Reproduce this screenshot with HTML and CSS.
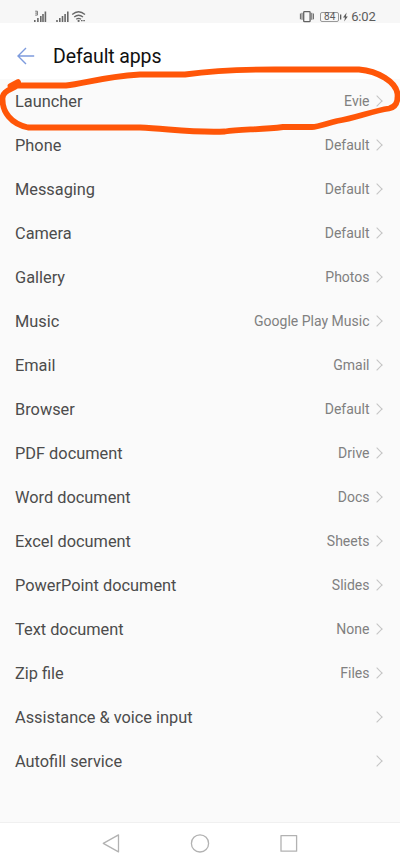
FILE: index.html
```html
<!DOCTYPE html>
<html lang="en">
<head>
<meta charset="utf-8">
<title>Default apps</title>
<link rel="stylesheet" href="styles.css">
</head>
<body>
<div class="screen">
  <div class="status">
    <svg class="status-left" width="56" height="14" viewBox="32 10 56 14" fill="none" stroke="#686868">
      <path d="M34.8 22v-2M37.9 22v-4M40.8 22v-6M43 22v-8M45.4 22V11.500" stroke-width="1.6"/>
      <path d="M35.2 11.2h2.2v1.9h-2.2M37.4 13.1v2h-2.2" stroke-width=".9"/>
      <path d="M57 22v-2M59.8 22v-4M62.5 22v-6M65.1 22v-8M67.8 22V11.500" stroke-width="1.6"/>
      <path d="M72.2 14.5q6.3-5.5 12.8 0M74.2 17q4.4-3.5 8.8 0M76.2 19.3q2.4-1.8 4.8 0" stroke-width="1.3"/>
      <circle cx="78.6" cy="20.9" r="1.1" fill="#686868" stroke="none"/>
      <path d="M81 20.7h4" stroke-width="1.2" stroke-dasharray="1.6 .7"/>
    </svg>
    <div class="status-right">
      <svg width="16" height="14" viewBox="299 10 16 14" fill="none" stroke="#626262">
        <rect x="303.7" y="11.7" width="6.4" height="10" rx=".8" stroke-width="1.3"/>
        <path d="M300.4 13.5v5.8M302 12.8v7M311.8 12.8v7M313.4 13.5v5.8" stroke-width="1"/>
      </svg>
      <span class="battery">84</span>
      <svg class="bolt" width="8" height="12" viewBox="0 0 8 12" fill="#5c5c5c"><path d="M0 3.500h1.300v5H0zM6.600 1.500 3 6.400H5l-.8 4.200 3.600-5.200H5.900z"/></svg>
      <span class="time">6:02</span>
    </div>
  </div>
  <header class="appbar">
    <svg width="18" height="18" viewBox="0 0 18 18" fill="none" stroke="#7d9bdd" stroke-width="1.4"><path d="M17.200 9H1M9 1 1 9l8 8"/></svg>
    <h1>Default apps</h1>
  </header>
  <main class="list">
    <div class="row"><span class="name">Launcher</span><span class="value">Evie</span><i class="chevron"></i></div>
    <div class="row"><span class="name">Phone</span><span class="value">Default</span><i class="chevron"></i></div>
    <div class="row"><span class="name">Messaging</span><span class="value">Default</span><i class="chevron"></i></div>
    <div class="row"><span class="name">Camera</span><span class="value">Default</span><i class="chevron"></i></div>
    <div class="row"><span class="name">Gallery</span><span class="value">Photos</span><i class="chevron"></i></div>
    <div class="row"><span class="name">Music</span><span class="value">Google Play Music</span><i class="chevron"></i></div>
    <div class="row"><span class="name">Email</span><span class="value">Gmail</span><i class="chevron"></i></div>
    <div class="row"><span class="name">Browser</span><span class="value">Default</span><i class="chevron"></i></div>
    <div class="row"><span class="name">PDF document</span><span class="value">Drive</span><i class="chevron"></i></div>
    <div class="row"><span class="name">Word document</span><span class="value">Docs</span><i class="chevron"></i></div>
    <div class="row"><span class="name">Excel document</span><span class="value">Sheets</span><i class="chevron"></i></div>
    <div class="row"><span class="name">PowerPoint document</span><span class="value">Slides</span><i class="chevron"></i></div>
    <div class="row"><span class="name">Text document</span><span class="value">None</span><i class="chevron"></i></div>
    <div class="row"><span class="name">Zip file</span><span class="value">Files</span><i class="chevron"></i></div>
    <div class="row"><span class="name">Assistance &amp; voice input</span><i class="chevron"></i></div>
    <div class="row"><span class="name">Autofill service</span><i class="chevron"></i></div>
  </main>
  <nav class="navbar">
    <svg width="20" height="20" viewBox="0 0 20 20"><path d="M17.500 1.900v17L2.300 10.400z"/></svg>
    <svg width="20" height="20" viewBox="0 0 20 20"><circle cx="10" cy="10.400" r="8.600"/></svg>
    <svg width="20" height="20" viewBox="0 0 20 20"><rect x="2" y="2.600" width="15.600" height="15.600"/></svg>
  </nav>
  <svg class="marker" width="400" height="80" viewBox="0 65 400 80">
    <path d="M10.500 86 18 82M14 85.500H66C84 84 100 77 140 74.500H185C212 71 240 69.500 275 69.500H359C378 71 396 82 397.500 94C398 102 396 107 389 108.500C372 111 356 118 337 121C325 124 318 127 312 127H283C260 130 240 129 225 131.500C195 133 170 129 140 127.500H28C11 124 2 112 2.500 98C3 91 10 90 17 85.500"/>
  </svg>
</div>
</body>
</html>
```
FILE: styles.css
```css
body {
  margin: 0;
  font-family: Roboto, "Liberation Sans", sans-serif;
}
.screen {
  position: relative;
  display: flex;
  flex-direction: column;
  width: 400px;
  height: 866px;
  overflow: hidden;
  background: #fafafa;
}
.status {
  display: flex;
  justify-content: space-between;
  box-sizing: border-box;
  height: 23px;
  padding: 10px 24.5px 0 32px;
  background: #f7f7f7;
  color: #5c5c5c;
}
.status-left { flex: none; }
.status-right {
  display: flex;
  align-items: flex-start;
}
.status svg { overflow: visible; }
.battery {
  box-sizing: border-box;
  width: 19px;
  height: 10px;
  margin: 2px 0 0 5px;
  border: 1px solid #999;
  border-radius: 2px;
  font-size: 10px;
  line-height: 8.5px;
  text-align: center;
}
.bolt { margin: 1px 3px 0 1px; }
.time {
  font-size: 13px;
  line-height: 14px;
  letter-spacing: -0.2px;
}
.appbar {
  display: flex;
  align-items: center;
  box-sizing: border-box;
  height: 56px;
  padding: 10px 17px 0;
  background: #fff;
}
.appbar h1 {
  margin: 1px 0 0 18px;
  font-size: 19.5px;
  font-weight: 400;
  line-height: 24px;
  letter-spacing: -0.12px;
  color: #111;
}
.list { flex: 1; }
.row {
  display: flex;
  align-items: center;
  height: 44px;
  padding: 0 17px 0 15px;
}
.name {
  flex: 1;
  font-size: 16.35px;
  color: #4c4c4c;
}
.value {
  font-size: 14px;
  color: #808080;
}
.chevron {
  width: 8px;
  height: 8px;
  margin: 0 2.5px 1px 3px;
  border: solid #c4c4c4;
  border-width: 1.3px 1.3px 0 0;
  box-sizing: border-box;
  transform: rotate(45deg);
}
.navbar {
  display: flex;
  justify-content: center;
  gap: 69px;
  box-sizing: border-box;
  height: 44px;
  padding-top: 10px;
  border-top: 1px solid #f0f0f0;
  background: #fff;
}
.navbar svg {
  fill: none;
  stroke: #b2b2b2;
  stroke-width: 1.3;
  stroke-linejoin: round;
}
.marker {
  position: absolute;
  top: 65px;
  left: 0;
  fill: none;
  stroke: #ff5608;
  stroke-width: 5.8;
  stroke-linecap: round;
  stroke-linejoin: round;
  pointer-events: none;
}
```
